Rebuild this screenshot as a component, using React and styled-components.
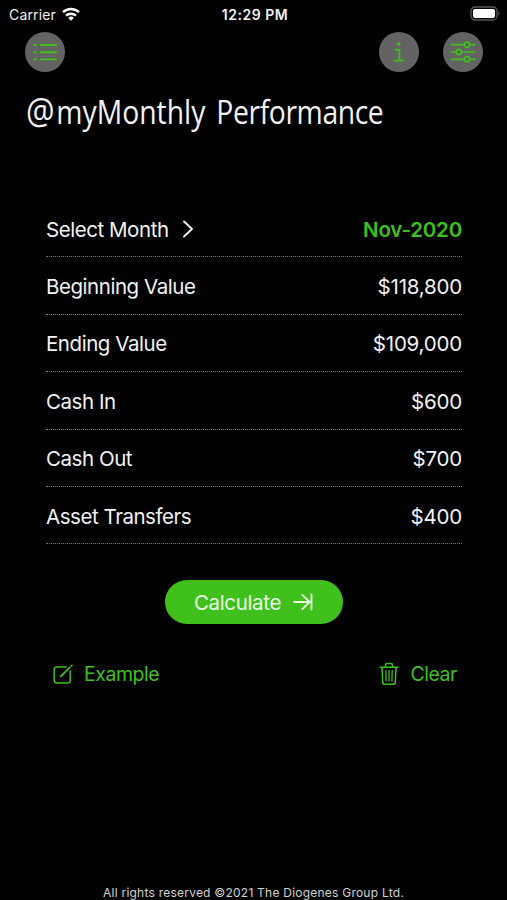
import styled, { createGlobalStyle } from "styled-components";

const GREEN = "#3fc01d";

const entries = [
  { label: "Select Month", value: "Nov-2020", picker: true },
  { label: "Beginning Value", value: "$118,800" },
  { label: "Ending Value", value: "$109,000" },
  { label: "Cash In", value: "$600" },
  { label: "Cash Out", value: "$700" },
  { label: "Asset Transfers", value: "$400" },
];

const WifiIcon = () => (
  <svg width="18" height="14" viewBox="0 0 18 14" fill="none" stroke="#fff" strokeWidth="2.5">
    <path d="M1 5.2a11.6 11.6 0 0 1 16 0" />
    <path d="M4 8.7a7.2 7.2 0 0 1 10 0" />
    <path d="M9 13.7L6.2 10.9a4 4 0 0 1 5.6 0z" fill="#fff" stroke="none" />
  </svg>
);

const BatteryIcon = () => (
  <svg width="31" height="16" viewBox="0 0 31 16">
    <rect x="1" y="1" width="26" height="13" rx="4" fill="none" stroke="#58585a" strokeWidth="1.3" />
    <rect x="3" y="3" width="22" height="9" rx="2" fill="#fff" />
    <path d="M28.5 5.3q2 2.2 0 4.4z" fill="#6c6c6e" />
  </svg>
);

const ListIcon = () => (
  <svg width="26" height="20" viewBox="0 0 26 20" fill="none" stroke={GREEN} strokeWidth="1.9" strokeLinecap="round">
    <path d="M2 3h2M8.8 3h15.2M2 10.2h2M8.8 10.2h15.2M2 17.4h2M8.8 17.4h15.2" />
  </svg>
);

const InfoIcon = () => (
  <svg width="14" height="22" viewBox="0 0 14 22" fill="none" stroke={GREEN} strokeWidth="1.8" strokeLinecap="round" strokeLinejoin="round">
    <circle cx="6.8" cy="3.1" r="1.8" fill={GREEN} stroke="none" />
    <path d="M3.2 8.6h4.2v11.1M2.8 19.7h8.4" />
  </svg>
);

const SlidersIcon = () => (
  <svg width="26" height="22" viewBox="0 0 26 22" fill="none" stroke={GREEN} strokeWidth="1.7" strokeLinecap="round">
    <path d="M1.3 3.7h12.8M20 3.7h4.7M1.3 11h4.6M11.7 11h13M1.3 18.3h12.8M20 18.3h4.7" />
    <circle cx="17" cy="3.7" r="2.6" />
    <circle cx="8.8" cy="11" r="2.6" />
    <circle cx="17" cy="18.3" r="2.6" />
  </svg>
);

const ChevronIcon = () => (
  <svg width="12" height="18" viewBox="0 0 12 18" fill="none" stroke="#f2f2f2" strokeWidth="1.9" strokeLinecap="round" strokeLinejoin="round">
    <path d="M2 1.5L10 9L2 16.5" />
  </svg>
);

const ArrowEndIcon = () => (
  <svg width="20" height="18" viewBox="0 0 20 18" fill="none" stroke="#e9ffe2" strokeWidth="1.8" strokeLinecap="round" strokeLinejoin="round">
    <path d="M1.2 9h15.6M9.3 1.9L16.6 9L9.3 16.1M18.5 1.5v15" />
  </svg>
);

const EditIcon = () => (
  <svg width="21" height="21" viewBox="0 0 21 21" fill="none" stroke={GREEN} strokeWidth="1.5" strokeLinecap="round" strokeLinejoin="round">
    <path d="M14 3H4.6A2.4 2.4 0 0 0 2.2 5.4v11.2A2.4 2.4 0 0 0 4.6 19h11.2a2.4 2.4 0 0 0 2.4-2.4V7" />
    <path d="M8.8 12.4L17.8 3.4M19.4 1.9l.4-.4" strokeWidth="1.8" />
  </svg>
);

const TrashIcon = () => (
  <svg width="20" height="24" viewBox="0 0 20 24" fill="none" stroke={GREEN} strokeWidth="1.5" strokeLinecap="round" strokeLinejoin="round">
    <path d="M1.2 5.3h17.6M6.5 5V3.1q0-1.7 1.7-1.7h3.6q1.7 0 1.7 1.7V5" />
    <path d="M3 5.5l.7 14.6q.1 2.1 2.2 2.1h8.2q2.1 0 2.2-2.1L17 5.5" />
    <path d="M6.8 8.7l.3 10.2M10 8.7v10.2M13.2 8.7l-.3 10.2" strokeWidth="1.3" />
  </svg>
);

const App = () => {
  return (
    <Screen>
      <GlobalStyle />
      <StatusBar>
        <Carrier>
          Carrier
          <WifiIcon />
        </Carrier>
        <Clock>12:29 PM</Clock>
        <Battery>
          <BatteryIcon />
        </Battery>
      </StatusBar>

      <Toolbar>
        <RoundButton aria-label="Menu"><ListIcon /></RoundButton>
        <ToolGroup>
          <RoundButton aria-label="Info"><InfoIcon /></RoundButton>
          <RoundButton aria-label="Settings"><SlidersIcon /></RoundButton>
        </ToolGroup>
      </Toolbar>

      <Title><AtSign>@</AtSign>myMonthly <Tight>Performance</Tight></Title>

      <Form>
        {entries.map((entry) => (
          <Row key={entry.label}>
            <Label>
              {entry.label}
              {entry.picker && <ChevronIcon />}
            </Label>
            <Value $accent={entry.picker}>{entry.value}</Value>
          </Row>
        ))}
      </Form>

      <CalculateButton>
        Calculate
        <ArrowEndIcon />
      </CalculateButton>

      <Actions>
        <TextButton><EditIcon />Example</TextButton>
        <TextButton><TrashIcon />Clear</TextButton>
      </Actions>

      <Footer>All rights reserved ©2021 The Diogenes Group Ltd.</Footer>
    </Screen>
  );
};

export default App;

const GlobalStyle = createGlobalStyle`
  * {
    box-sizing: border-box;
  }
  body {
    margin: 0;
    background: #000;
  }
  svg {
    display: block;
    flex: none;
  }
  button {
    border: 0;
    padding: 0;
    background: none;
    font: inherit;
  }
`;

const Screen = styled.div`
  display: flex;
  flex-direction: column;
  width: 507px;
  height: 900px;
  overflow: hidden;
  background: #000;
  color: #f2f2f2;
  font-family: Inter, "Liberation Sans", sans-serif;
  white-space: nowrap;
`;

const StatusBar = styled.div`
  display: grid;
  grid-template-columns: 1fr auto 1fr;
  align-items: center;
  height: 28px;
  padding: 0 6px 0 9px;
`;

const Carrier = styled.div`
  display: flex;
  align-items: center;
  gap: 6px;
  font-size: 14px;
  letter-spacing: 0.15px;
`;

const Clock = styled.div`
  font-size: 14px;
  font-weight: 600;
  letter-spacing: 0.5px;
`;

const Battery = styled.div`
  display: flex;
  justify-content: flex-end;
`;

const Toolbar = styled.div`
  display: flex;
  justify-content: space-between;
  padding: 4px 24px 0 25px;
`;

const ToolGroup = styled.div`
  display: flex;
  gap: 24px;
`;

const RoundButton = styled.button`
  display: flex;
  align-items: center;
  justify-content: center;
  width: 40px;
  height: 40px;
  border-radius: 50%;
  background: #636363;
`;

const Title = styled.h1`
  width: max-content;
  height: 44px;
  margin: 18px 0 0 26px;
  font-family: "Open Sans", sans-serif;
  font-size: 32px;
  font-weight: 400;
  line-height: 44px;
  word-spacing: 4px;
  transform: scaleX(0.885);
  transform-origin: left;
`;

const AtSign = styled.span`
  margin-right: 2px;
  font-size: 36px;
  line-height: 1;
`;

const Tight = styled.span`
  letter-spacing: -0.45px;
`;

const Form = styled.div`
  display: flex;
  flex-direction: column;
  margin: 66px 45px 0 46px;
`;

const Row = styled.div`
  display: flex;
  justify-content: space-between;
  align-items: center;
  height: 57.4px;
  padding-top: 2px;
  border-bottom: 1px dotted #777;
  font-size: 20.5px;
`;

const Label = styled.div`
  display: flex;
  align-items: center;
  gap: 13px;
  letter-spacing: -0.45px;
`;

const Value = styled.div`
  color: ${(props) => (props.$accent ? GREEN : "#f2f2f2")};
  font-weight: ${(props) => (props.$accent ? 600 : 400)};
  letter-spacing: -0.2px;
`;

const CalculateButton = styled.button`
  display: flex;
  align-items: center;
  justify-content: center;
  align-self: center;
  gap: 12px;
  width: 178px;
  height: 44px;
  margin-top: 36px;
  border-radius: 22px;
  background: ${GREEN};
  color: #e9ffe2;
  font-size: 20.5px;
  letter-spacing: -0.35px;
`;

const Actions = styled.div`
  display: flex;
  justify-content: space-between;
  padding: 38px 50px 0 52px;
`;

const TextButton = styled.button`
  display: flex;
  align-items: center;
  gap: 11px;
  color: ${GREEN};
  font-size: 19.5px;
  letter-spacing: -0.45px;
`;

const Footer = styled.div`
  margin-top: auto;
  text-align: center;
  font-size: 12px;
  line-height: 14px;
  letter-spacing: 0.23px;
  color: #d2d2d2;
`;
